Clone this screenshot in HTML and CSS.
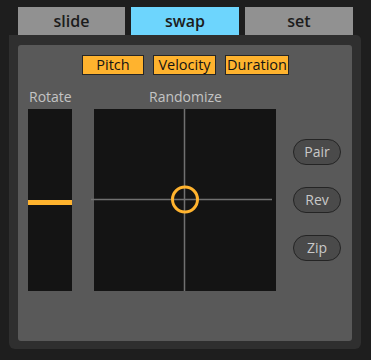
FILE: index.html
```html
<!DOCTYPE html>
<html lang="en">
<head>
    <meta charset="UTF-8">
    <meta name="viewport" content="width=device-width, initial-scale=1.0">
    <title>Swap</title>
    <link rel="stylesheet" href="styles.css">
</head>
<body>

    <div class="device">
        <!-- Tab bar -->
        <div class="tabs">
            <div class="tab">slide</div>
            <div class="tab active">swap</div>
            <div class="tab">set</div>
        </div>

        <div class="panel">
            <div class="panel-inner">
                <!-- Target toggles -->
                <div class="toggles">
                    <div class="toggle pitch">Pitch</div>
                    <div class="toggle velocity">Velocity</div>
                    <div class="toggle duration">Duration</div>
                </div>

                <div class="controls">
                    <div class="rotate">
                        <div class="label">Rotate</div>
                        <div class="slider">
                            <div class="slider-bar" style="top: 91px;"></div>
                        </div>
                    </div>

                    <div class="randomize">
                        <div class="label center">Randomize</div>
                        <div class="pad">
                            <svg class="cross" width="182" height="182" viewBox="0 0 182 182">
                                <line x1="-3" y1="90.5" x2="178" y2="90.5" stroke="#707070" stroke-width="1.5"/>
                                <line x1="90.5" y1="0" x2="90.5" y2="182" stroke="#707070" stroke-width="1.5"/>
                                <circle cx="91" cy="90.5" r="12.5" fill="none" stroke="#ffb32e" stroke-width="3"/>
                            </svg>
                        </div>
                    </div>

                    <div class="actions">
                        <button class="pill">Pair</button>
                        <button class="pill">Rev</button>
                        <button class="pill">Zip</button>
                    </div>
                </div>
            </div>
        </div>
    </div>

</body>
</html>
```

FILE: styles.css
```css
body {
    font-family: 'Open Sans', 'Liberation Sans', sans-serif;
    margin: 0;
    padding: 0;
    background-color: #1e1e1e;
    width: 371px;
    height: 360px;
    overflow: hidden;
}

.device {
    padding: 7px 0 0 9px;
}

.tabs {
    display: grid;
    grid-template-columns: 107px 108px 108px;
    gap: 6px;
    margin-left: 9px;
}

.tab {
    height: 28px;
    background: #919191;
    color: #1c1c1c;
    font-size: 16px;
    font-weight: 600;
    text-align: center;
    line-height: 28px;
}

.tab.active {
    background: #6dd5fd;
}

/* Outer dark frame */
.panel {
    width: 352px;
    height: 314px;
    box-sizing: border-box;
    background: #2f2f2f;
    border-radius: 0 5px 6px 6px;
    padding: 10px 9px 8px 9px;
}

.panel-inner {
    height: 100%;
    background: #595959;
    border-radius: 3px;
    padding-top: 10px;
    box-sizing: border-box;
}

.toggles {
    display: flex;
    justify-content: center;
    gap: 9px;
    padding-left: 1px;
}

.toggle {
    height: 20px;
    box-sizing: border-box;
    background: #ffb32e;
    border: 1px solid #262626;
    color: #141414;
    font-size: 14.5px;
    line-height: 17px;
    padding: 0;
    white-space: nowrap;
    text-align: center;
}

.toggle.pitch {
    width: 62px;
}

.toggle.velocity {
    width: 63px;
}

.toggle.duration {
    width: 64px;
}

.controls {
    display: flex;
    align-items: flex-end;
    padding-left: 10px;
    margin-top: 13px;
}

.label {
    color: #c4c4c4;
    font-size: 14px;
    height: 21px;
    line-height: 18px;
    padding-left: 1px;
}

.label.center {
    text-align: center;
}

.rotate {
    width: 44px;
}

.slider {
    position: relative;
    height: 182px;
    background: #141414;
}

.slider-bar {
    position: absolute;
    left: 0;
    right: 0;
    height: 5px;
    background: #ffb32e;
}

.randomize {
    width: 182px;
    margin-left: 22px;
}

.pad {
    position: relative;
    height: 182px;
    background: #141414;
}

.cross {
    position: absolute;
    left: 0;
    top: 0;
    overflow: visible;
}

.actions {
    height: 182px;
    display: flex;
    flex-direction: column;
    justify-content: center;
    gap: 22px;
    margin-left: 17px;
}

.pill {
    width: 48px;
    height: 26px;
    box-sizing: border-box;
    background: #4a4a4a;
    border: 1.5px solid #242424;
    border-radius: 13px;
    color: #c8c8c8;
    font-family: inherit;
    font-size: 14px;
    line-height: 22px;
    padding: 0;
}
```
